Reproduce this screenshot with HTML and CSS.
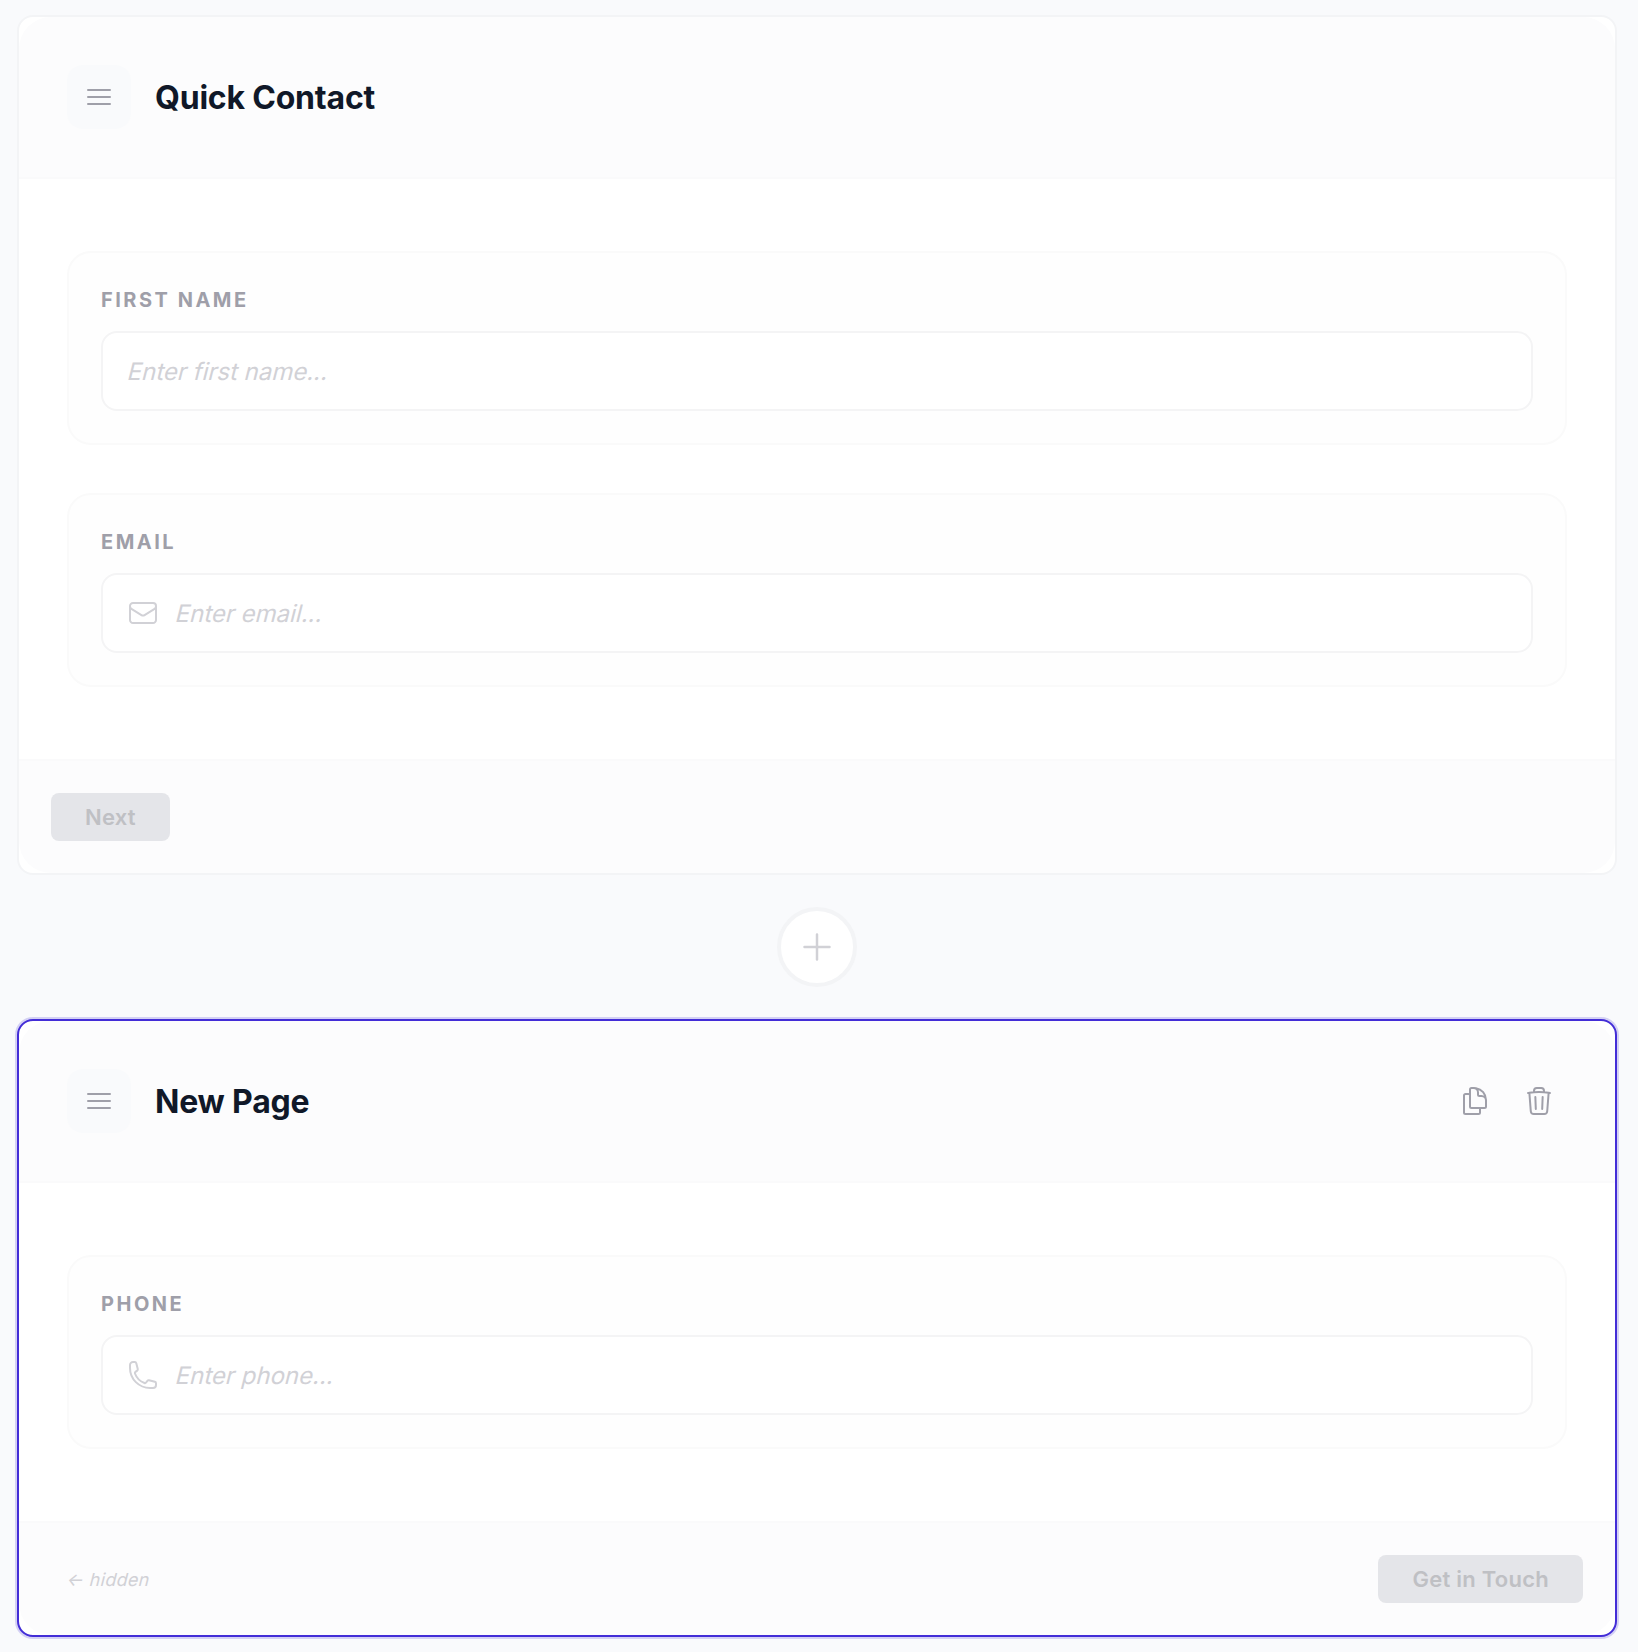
FILE: index.html
```html
<!DOCTYPE html>
<html lang="en">

<head>
    <meta charset="UTF-8">
    <meta name="viewport" content="width=device-width, initial-scale=1.0">
    <title>Form Builder</title>
    <link rel="stylesheet" href="styles.css">
</head>

<body>
    <section class="page-card">
        <header class="page-header">
            <div class="drag-handle">
                <svg class="icon" viewBox="0 0 24 24"><path d="M3.75 6.75h16.5M3.75 12h16.5m-16.5 5.25h16.5" /></svg>
            </div>
            <h2 class="page-title">Quick Contact</h2>
        </header>

        <div class="page-body">
            <div class="field">
                <div class="field-label">First name</div>
                <div class="field-input">
                    <span class="placeholder">Enter first name...</span>
                </div>
            </div>
            <div class="field">
                <div class="field-label">Email</div>
                <div class="field-input">
                    <svg class="icon" viewBox="0 0 24 24"><path d="M21.75 6.75v10.5a2.25 2.25 0 0 1-2.25 2.25h-15a2.25 2.25 0 0 1-2.25-2.25V6.75m19.5 0A2.25 2.25 0 0 0 19.5 4.5h-15a2.25 2.25 0 0 0-2.25 2.25m19.5 0v.243a2.25 2.25 0 0 1-1.07 1.916l-7.5 4.615a2.25 2.25 0 0 1-2.36 0L3.32 8.91a2.25 2.25 0 0 1-1.07-1.916V6.75" /></svg>
                    <span class="placeholder">Enter email...</span>
                </div>
            </div>
        </div>

        <footer class="page-footer">
            <button class="nav-button" type="button">Next</button>
        </footer>
    </section>

    <button class="add-page" type="button" aria-label="Add page">
        <svg class="icon icon-plus" viewBox="0 0 24 24"><path d="M12 4.5v15m7.5-7.5h-15" /></svg>
    </button>

    <section class="page-card selected">
        <header class="page-header">
            <div class="drag-handle">
                <svg class="icon" viewBox="0 0 24 24"><path d="M3.75 6.75h16.5M3.75 12h16.5m-16.5 5.25h16.5" /></svg>
            </div>
            <h2 class="page-title">New Page</h2>
            <div class="page-actions">
                <button class="action" type="button" aria-label="Duplicate">
                    <svg class="icon" viewBox="0 0 24 24"><path d="M15.75 17.25v3.375c0 .621-.504 1.125-1.125 1.125h-9.75a1.125 1.125 0 0 1-1.125-1.125V7.875c0-.621.504-1.125 1.125-1.125H6.75a9.06 9.06 0 0 1 1.5.124m7.5 10.376h3.375c.621 0 1.125-.504 1.125-1.125V11.25c0-4.46-3.243-8.161-7.5-8.876a9.06 9.06 0 0 0-1.5-.124H9.375c-.621 0-1.125.504-1.125 1.125v3.5m7.5 10.375H9.375a1.125 1.125 0 0 1-1.125-1.125v-9.25m12 6.625v-1.875a3.375 3.375 0 0 0-3.375-3.375h-1.5a1.125 1.125 0 0 1-1.125-1.125v-1.5a3.375 3.375 0 0 0-3.375-3.375H9.75" /></svg>
                </button>
                <button class="action" type="button" aria-label="Delete">
                    <svg class="icon" viewBox="0 0 24 24"><path d="m14.74 9-.346 9m-4.788 0L9.26 9m9.968-3.21c.342.052.682.107 1.022.166m-1.022-.165L18.16 19.673a2.25 2.25 0 0 1-2.244 2.077H8.084a2.25 2.25 0 0 1-2.244-2.077L4.772 5.79m14.456 0a48.108 48.108 0 0 0-3.478-.397m-12 .562c.34-.059.68-.114 1.022-.165m0 0a48.11 48.11 0 0 1 3.478-.397m7.5 0v-.916c0-1.18-.91-2.164-2.09-2.201a51.964 51.964 0 0 0-3.32 0c-1.18.037-2.09 1.022-2.09 2.201v.916m7.5 0a48.667 48.667 0 0 0-7.5 0" /></svg>
                </button>
            </div>
        </header>

        <div class="page-body">
            <div class="field">
                <div class="field-label">Phone</div>
                <div class="field-input">
                    <svg class="icon" viewBox="0 0 24 24"><path d="M2.25 6.75c0 8.284 6.716 15 15 15h2.25a2.25 2.25 0 0 0 2.25-2.25v-1.372c0-.516-.351-.966-.852-1.091l-4.423-1.106c-.44-.11-.902.055-1.173.417l-.97 1.293c-.282.376-.769.542-1.21.38a12.035 12.035 0 0 1-7.143-7.143c-.162-.441.004-.928.38-1.21l1.293-.97c.363-.271.527-.734.417-1.173L6.963 3.102a1.125 1.125 0 0 0-1.091-.852H4.5A2.25 2.25 0 0 0 2.25 4.5v2.25Z" /></svg>
                    <span class="placeholder">Enter phone...</span>
                </div>
            </div>
        </div>

        <footer class="page-footer">
            <span class="back-hidden">← hidden</span>
            <button class="nav-button submit" type="button">Get in Touch</button>
        </footer>
    </section>
</body>

</html>
```
FILE: styles.css
```css
* {
    box-sizing: border-box;
}

body {
    display: flex;
    flex-direction: column;
    align-items: center;
    gap: 32px;
    margin: 0;
    padding: 15px 21px 15px 17px;
    font-family: Inter, "Liberation Sans", sans-serif;
    font-optical-sizing: none;
    background-color: #f9fafc;
}

button {
    font-family: inherit;
    border: none;
}

.icon {
    display: block;
    flex: none;
    width: 32px;
    height: 32px;
    fill: none;
    stroke: currentColor;
    stroke-width: 1.5;
    stroke-linecap: round;
    stroke-linejoin: round;
}

.icon-plus {
    width: 40px;
    height: 40px;
}

/* page card */
.page-card {
    width: 100%;
    border: 2px solid #f3f4f6;
    border-radius: 16px;
    background-color: white;
}

.page-card.selected {
    border-color: #432dd7;
    box-shadow: 0 0 0 2px rgba(67, 45, 215, 0.2);
}

.page-header {
    display: flex;
    align-items: center;
    gap: 24px;
    height: 162px;
    padding: 48px;
    border-bottom: 2px solid #fafafb;
    border-radius: 32px 32px 0 0;
    background-color: #fcfcfd;
}

.drag-handle {
    display: flex;
    align-items: center;
    justify-content: center;
    width: 64px;
    height: 64px;
    border-radius: 16px;
    background-color: #f9fafc;
    color: #9f9fa9;
}

.page-title {
    margin: 0;
    padding-top: 2px;
    font-size: 32px;
    font-weight: 700;
    line-height: 40px;
    letter-spacing: -0.2px;
    color: #101828;
}

.page-actions {
    display: flex;
    gap: 8px;
    margin-left: auto;
}

.action {
    padding: 12px;
    background: none;
    color: #9f9fa9;
}

.page-body {
    display: flex;
    flex-direction: column;
    gap: 48px;
    padding: 72px 48px;
}

/* fields */
.field {
    padding: 32px;
    border: 2px solid #fafafa;
    border-radius: 24px;
    background-color: #fefefe;
}

.field-label {
    margin-bottom: 16px;
    font-size: 20px;
    font-weight: 700;
    line-height: 30px;
    letter-spacing: 2.5px;
    text-transform: uppercase;
    color: #9f9fa9;
}

.field-input {
    display: flex;
    align-items: center;
    gap: 16px;
    height: 80px;
    padding: 0 24px;
    border: 2px solid #f4f4f5;
    border-radius: 16px;
    background-color: white;
    color: #d1d1d6;
}

/* slanted roman instead of the cursive italic */
.placeholder {
    padding-top: 2px;
    font-size: 24px;
    line-height: 32px;
    transform: skewX(-14deg);
    transform-origin: 0 68%;
}

/* footer */
.page-footer {
    display: flex;
    align-items: center;
    height: 114px;
    padding: 0 32px;
    border-top: 2px solid #fafafb;
    border-radius: 0 0 32px 32px;
    background-color: #fcfcfd;
}

.nav-button {
    height: 48px;
    padding: 0 34px;
    border-radius: 8px;
    font-size: 22px;
    font-weight: 600;
    letter-spacing: 0.25px;
    background-color: #e4e5e9;
    color: #bfc0c4;
}

.submit {
    margin-left: auto;
}

.back-hidden {
    margin-left: 15px;
    font-size: 18px;
    letter-spacing: 0.3px;
    color: #d1d1d6;
    transform: skewX(-14deg);
    transform-origin: 0 75%;
}

.add-page {
    display: flex;
    align-items: center;
    justify-content: center;
    width: 80px;
    height: 80px;
    padding: 0;
    border: 4px solid #f3f4f6;
    border-radius: 50%;
    background-color: white;
    color: #d1d1d6;
}
```
